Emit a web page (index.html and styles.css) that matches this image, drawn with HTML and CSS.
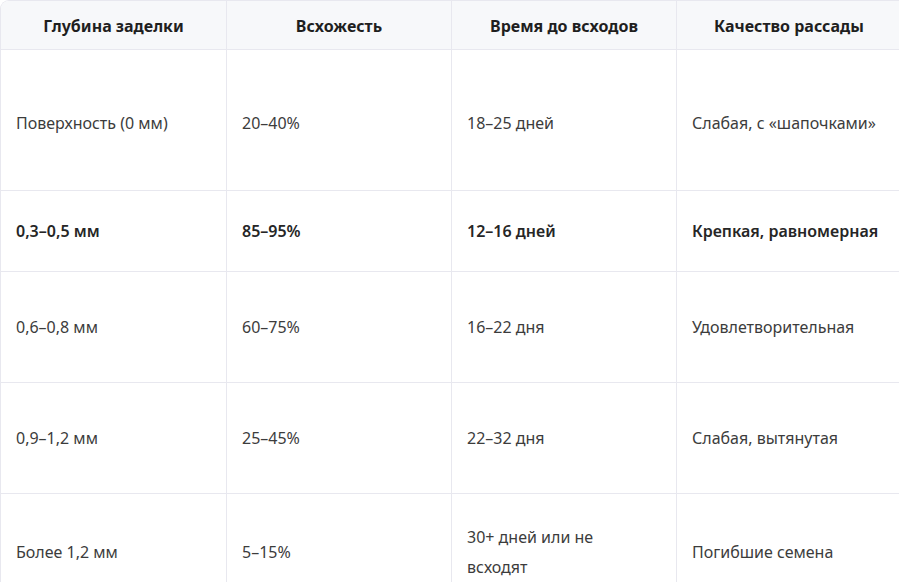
FILE: index.html
```html
<!DOCTYPE html>
<html lang="ru">
<head>
<meta charset="utf-8">
<title>Глубина заделки</title>
<link rel="stylesheet" href="styles.css">
</head>
<body>
<div class="wrap">
<table class="tbl">
  <colgroup>
    <col class="c1"><col class="c2"><col class="c3"><col class="c4">
  </colgroup>
  <thead>
    <tr class="h">
      <th>Глубина заделки</th>
      <th>Всхожесть</th>
      <th>Время до всходов</th>
      <th>Качество рассады</th>
    </tr>
  </thead>
  <tbody>
    <tr class="r1">
      <td>Поверхность (0 мм)</td>
      <td>20–40%</td>
      <td>18–25 дней</td>
      <td>Слабая, с «шапочками»</td>
    </tr>
    <tr class="r2 best">
      <td>0,3–0,5 мм</td>
      <td>85–95%</td>
      <td>12–16 дней</td>
      <td>Крепкая, равномерная</td>
    </tr>
    <tr class="r3">
      <td>0,6–0,8 мм</td>
      <td>60–75%</td>
      <td>16–22 дня</td>
      <td>Удовлетворительная</td>
    </tr>
    <tr class="r3">
      <td>0,9–1,2 мм</td>
      <td>25–45%</td>
      <td>22–32 дня</td>
      <td>Слабая, вытянутая</td>
    </tr>
    <tr class="r5">
      <td>Более 1,2 мм</td>
      <td>5–15%</td>
      <td>30+ дней или не всходят</td>
      <td>Погибшие семена</td>
    </tr>
  </tbody>
</table>
</div>
</body>
</html>
```

FILE: styles.css
```css
html, body {
  margin: 0;
  padding: 0;
  background: #ffffff;
}
.wrap {
  width: 899px;
  height: 582px;
  overflow: hidden;
}
.tbl {
  width: 901px;
  table-layout: fixed;
  border-collapse: separate;
  border-spacing: 0;
  border-top: 1px solid #e8e8ef;
  border-left: 1px solid #e8e8ef;
  border-top-left-radius: 9px;
  font-family: "Noto Sans", "Open Sans", sans-serif;
  font-size: 16px;
  color: #3c3c3c;
}
.c1 { width: 226px; }
.c2, .c3, .c4 { width: 225px; }
.tbl th, .tbl td {
  box-sizing: border-box;
  border-right: 1px solid #e8e8ef;
  border-bottom: 1px solid #e8e8ef;
  padding: 0 22px 0 15px;
  vertical-align: middle;
  line-height: 30px;
}
.tbl th {
  background: #f7f8fa;
  font-weight: 700;
  color: #1f1f1f;
  text-align: center;
  padding: 1px 15px 0;
}
.tbl th:first-child { border-top-left-radius: 8px; }
.tbl td { text-align: left; font-weight: 400; }
.h { height: 49px; }
.r1 td { padding-top: 6px; }
.r1 { height: 141px; }
.r2 { height: 81px; }
.r3 { height: 111px; }
.r5 { height: 116px; }
.best td { font-weight: 600; color: #262626; }
```
